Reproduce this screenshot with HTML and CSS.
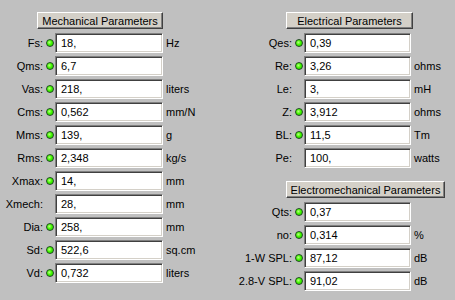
FILE: index.html
```html
<!DOCTYPE html>
<html>
<head>
<meta charset="utf-8">
<link rel="stylesheet" href="styles.css">
</head>
<body>
<div class="wrap">
  <section class="panel left">
    <div class="hdr hdr-mech">Mechanical Parameters</div>
    <div class="grid">
      <span class="lbl">Fs:</span><span class="led"></span><span class="box">18,</span><span class="unit">Hz</span>
      <span class="lbl">Qms:</span><span class="led"></span><span class="box">6,7</span><span class="unit"></span>
      <span class="lbl">Vas:</span><span class="led"></span><span class="box">218,</span><span class="unit">liters</span>
      <span class="lbl">Cms:</span><span class="led"></span><span class="box">0,562</span><span class="unit">mm/N</span>
      <span class="lbl">Mms:</span><span class="led"></span><span class="box">139,</span><span class="unit">g</span>
      <span class="lbl">Rms:</span><span class="led"></span><span class="box">2,348</span><span class="unit">kg/s</span>
      <span class="lbl">Xmax:</span><span class="led"></span><span class="box">14,</span><span class="unit">mm</span>
      <span class="lbl">Xmech:</span><span class="noled"></span><span class="box">28,</span><span class="unit">mm</span>
      <span class="lbl">Dia:</span><span class="led"></span><span class="box">258,</span><span class="unit">mm</span>
      <span class="lbl">Sd:</span><span class="led"></span><span class="box">522,6</span><span class="unit">sq.cm</span>
      <span class="lbl">Vd:</span><span class="led"></span><span class="box">0,732</span><span class="unit">liters</span>
    </div>
  </section>
  <section class="panel right">
    <div class="hdr hdr-elec">Electrical Parameters</div>
    <div class="grid">
      <span class="lbl">Qes:</span><span class="led"></span><span class="box">0,39</span><span class="unit"></span>
      <span class="lbl">Re:</span><span class="led"></span><span class="box">3,26</span><span class="unit">ohms</span>
      <span class="lbl">Le:</span><span class="noled"></span><span class="box">3,</span><span class="unit">mH</span>
      <span class="lbl">Z:</span><span class="led"></span><span class="box">3,912</span><span class="unit">ohms</span>
      <span class="lbl">BL:</span><span class="led"></span><span class="box">11,5</span><span class="unit">Tm</span>
      <span class="lbl">Pe:</span><span class="noled"></span><span class="box">100,</span><span class="unit">watts</span>
    </div>
    <div class="hdr hdr-em">Electromechanical Parameters</div>
    <div class="grid">
      <span class="lbl">Qts:</span><span class="led"></span><span class="box">0,37</span><span class="unit"></span>
      <span class="lbl">no:</span><span class="led"></span><span class="box">0,314</span><span class="unit">%</span>
      <span class="lbl">1-W SPL:</span><span class="led"></span><span class="box">87,12</span><span class="unit">dB</span>
      <span class="lbl">2.8-V SPL:</span><span class="led"></span><span class="box">91,02</span><span class="unit">dB</span>
    </div>
  </section>
</div>
</body>
</html>
```
FILE: styles.css
```css
html, body {
  margin: 0;
  padding: 0;
}
body {
  background: #c0c0c0;
  font-family: "Liberation Sans", Arial, sans-serif;
  font-size: 11px;
  color: #000;
  width: 455px;
  height: 300px;
  overflow: hidden;
}
.wrap {
  display: flex;
  padding-top: 12px;
}
.left {
  width: 233px;
}
.right {
  flex: 1;
}
.hdr {
  box-sizing: border-box;
  height: 17px;
  display: flex;
  align-items: center;
  justify-content: center;
  background: #d4d0c8;
  border: 1px solid;
  border-color: #ffffff #404040 #404040 #ffffff;
  box-shadow: inset -1px -1px #808080;
  margin-bottom: 4px;
  white-space: nowrap;
}
.hdr-mech {
  margin-left: 37px;
  width: 126px;
}
.hdr-elec {
  margin-left: 53px;
  width: 127px;
}
.hdr-em {
  margin-left: 53px;
  width: 159px;
  margin-top: 13px;
}
.grid {
  display: grid;
  grid-template-columns: 44px 11px 108px auto;
  grid-auto-rows: 20px;
  row-gap: 3px;
  align-items: center;
}
.right .grid {
  grid-template-columns: 60px 11px 107px auto;
}
.lbl {
  text-align: right;
  white-space: nowrap;
  padding-right: 1px;
}
.led {
  box-sizing: border-box;
  width: 8px;
  height: 8px;
  margin-left: 2px;
  border-radius: 50%;
  border: 1px solid #1f4a1f;
  background: radial-gradient(circle at 40% 40%, #b8ff80 0%, #44f800 45%, #18c000 100%);
}
.box {
  box-sizing: border-box;
  height: 20px;
  background: #fff;
  border: 1px solid;
  border-color: #808080 #ffffff #ffffff #808080;
  box-shadow: inset 1px 1px #404040, inset -1px -1px #d4d0c8;
  padding-left: 5px;
  line-height: 18px;
  white-space: nowrap;
}
.unit {
  padding-left: 3px;
  white-space: nowrap;
}
```
